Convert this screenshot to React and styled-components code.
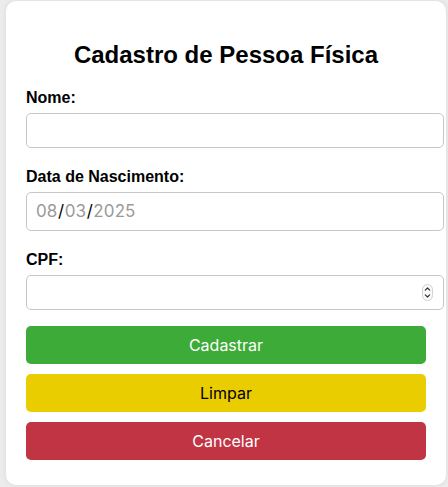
import React from "react";
import styled, { createGlobalStyle } from "styled-components";

const GlobalStyle = createGlobalStyle`
  html, body {
    margin: 0;
    padding: 0;
    background: #ececec;
    font-family: "Liberation Sans", Arial, sans-serif;
  }
  * { box-sizing: border-box; }
`;

const Page = styled.div`
  padding: 1px 2px 2px 6px;
`;

const Card = styled.div`
  width: 440px;
  background: #ffffff;
  border-radius: 10px;
  box-shadow: 0 0 6px rgba(0, 0, 0, 0.08);
  padding: 20px 20px 25px;
`;

const Title = styled.h2`
  margin: 19.92px 0;
  font-size: 24px;
  font-weight: bold;
  text-align: center;
  color: #000;
  line-height: normal;
`;

const Fields = styled.div`
  display: flex;
  flex-direction: column;
  gap: 20px;
`;

const Field = styled.div`
  display: flex;
  flex-direction: column;
`;

const Label = styled.label`
  display: block;
  font-size: 16px;
  font-weight: bold;
  color: #000;
  line-height: normal;
  margin-bottom: 6px;
`;

const boxStyles = `
  width: calc(100% + 18px);
  border: 1px solid #c6c6c6;
  border-radius: 5px;
  background: #fff;
  font-size: 16px;
  font-family: "Liberation Sans", Arial, sans-serif;
`;

const TextInput = styled.input`
  ${boxStyles}
  height: 35px;
  padding: 0 8px;
  outline: none;
  color: #000;
`;

const DateBox = styled.div`
  ${boxStyles}
  height: 39px;
  padding: 0 9px;
  display: flex;
  align-items: center;
  font-family: "Inter", "Liberation Sans", sans-serif;
  font-size: 17px;
  letter-spacing: 0.1px;
`;

const Segment = styled.span`
  color: ${(p) => (p.$sep ? "#000" : "#9a9a9a")};
  padding: ${(p) => (p.$sep ? "0 0.5px" : "0")};
`;

const NumberBox = styled.div`
  ${boxStyles}
  height: 35px;
  padding: 0 10px 0 8px;
  display: flex;
  align-items: center;
`;

const BareInput = styled.input`
  flex: 1;
  min-width: 0;
  border: none;
  outline: none;
  background: transparent;
  font-size: 16px;
  font-family: "Liberation Sans", Arial, sans-serif;
  padding: 0;
`;

const Buttons = styled.div`
  margin-top: 16px;
  display: flex;
  flex-direction: column;
  gap: 10px;
`;

const palette = {
  green: { bg: "#3dab37", fg: "#ffffff" },
  yellow: { bg: "#e9cd00", fg: "#000000" },
  red: { bg: "#c13443", fg: "#ffffff" },
};

const Button = styled.button`
  width: 100%;
  height: 38px;
  border: none;
  border-radius: 5px;
  background: ${(p) => palette[p.$tone].bg};
  color: ${(p) => palette[p.$tone].fg};
  font-family: "Inter", "Liberation Sans", sans-serif;
  font-size: 16px;
  cursor: pointer;
  padding: 0;
`;

const Spinner = () => (
  <svg width="11" height="17" viewBox="0 0 11 17" aria-hidden="true">
    <rect x="0.5" y="0.5" width="10" height="16" rx="5" fill="#fafafa" stroke="#cfcfcf" />
    <path d="M3.3 6.2 L5.5 4 L7.7 6.2" fill="none" stroke="#333" strokeWidth="1.2" strokeLinecap="round" strokeLinejoin="round" />
    <path d="M3.3 10.8 L5.5 13 L7.7 10.8" fill="none" stroke="#333" strokeWidth="1.2" strokeLinecap="round" strokeLinejoin="round" />
  </svg>
);

export default function App() {
  return (
    <>
      <GlobalStyle />
      <Page>
        <Card>
          <Title>Cadastro de Pessoa Física</Title>
          <Fields>
            <Field>
              <Label htmlFor="nome">Nome:</Label>
              <TextInput id="nome" type="text" />
            </Field>
            <Field>
              <Label>Data de Nascimento:</Label>
              <DateBox>
                <Segment>08</Segment>
                <Segment $sep>/</Segment>
                <Segment>03</Segment>
                <Segment $sep>/</Segment>
                <Segment>2025</Segment>
              </DateBox>
            </Field>
            <Field>
              <Label htmlFor="cpf">CPF:</Label>
              <NumberBox>
                <BareInput id="cpf" type="text" inputMode="numeric" />
                <Spinner />
              </NumberBox>
            </Field>
          </Fields>
          <Buttons>
            <Button $tone="green">Cadastrar</Button>
            <Button $tone="yellow">Limpar</Button>
            <Button $tone="red">Cancelar</Button>
          </Buttons>
        </Card>
      </Page>
    </>
  );
}
